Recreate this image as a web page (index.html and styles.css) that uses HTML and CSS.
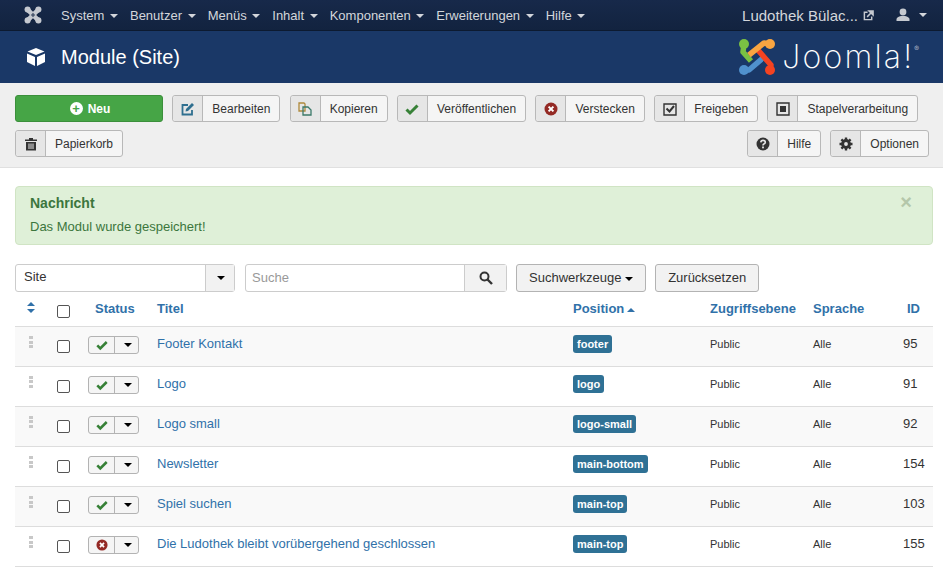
FILE: index.html
```html
<!DOCTYPE html>
<html lang="de">

<head>
    <meta charset="UTF-8">
    <meta name="viewport" content="width=device-width, initial-scale=1.0">
    <title>Module (Site)</title>
    <link rel="stylesheet" href="styles.css">
</head>

<body>
    <svg class="sprites" width="0" height="0">
        <symbol id="ok" viewBox="0 0 14 14"><path d="M1.5 7.5 L5 11 L12.5 3.5" fill="none" stroke="currentColor" stroke-width="3"/></symbol>
        <symbol id="no" viewBox="0 0 14 14"><circle cx="7" cy="7" r="6.5" fill="currentColor"/><path d="M4.6 4.6 L9.4 9.4 M9.4 4.6 L4.6 9.4" stroke="#fff" stroke-width="2"/></symbol>
    </svg>

    <nav class="topbar">
        <svg class="topbar-logo" viewBox="0 0 20 20" width="18" height="18">
            <path d="M4 4 L16 16 M16 4 L4 16" stroke="#c5c9d0" stroke-width="5"/>
            <circle cx="4" cy="4" r="3.4" fill="#c5c9d0"/><circle cx="16" cy="4" r="3.4" fill="#c5c9d0"/>
            <circle cx="4" cy="16" r="3.4" fill="#c5c9d0"/><circle cx="16" cy="16" r="3.4" fill="#c5c9d0"/>
            <path d="M10 7.6 L12.4 10 L10 12.4 L7.6 10 Z" fill="#4d5a70"/>
        </svg>
        <ul class="menu">
            <li>System <i class="caret"></i></li>
            <li>Benutzer <i class="caret"></i></li>
            <li>Menüs <i class="caret"></i></li>
            <li>Inhalt <i class="caret"></i></li>
            <li>Komponenten <i class="caret"></i></li>
            <li>Erweiterungen <i class="caret"></i></li>
            <li>Hilfe <i class="caret"></i></li>
        </ul>
        <div class="topbar-right">
            <span class="site-name">Ludothek Bülac...</span>
            <svg viewBox="0 0 12 12" width="11" height="11">
                <path d="M9.5 7 V10.5 H1.5 V2.5 H5" fill="none" stroke="#c5c9d0" stroke-width="1.6"/>
                <path d="M4.5 7.5 L10 2 M6.5 1 H11 V5.5 Z" stroke="#c5c9d0" stroke-width="1.6" fill="#c5c9d0"/>
            </svg>
            <svg class="user-icon" viewBox="0 0 14 14" width="14" height="14">
                <circle cx="7" cy="4" r="3.4" fill="#c5c9d0"/>
                <path d="M0.5 13 V11 Q1 9 5 8 H9 Q13 9 13.5 11 V13 Z" fill="#c5c9d0"/>
            </svg>
            <i class="caret"></i>
        </div>
    </nav>

    <header class="title-bar">
        <svg viewBox="0 0 20 20" width="20" height="20">
            <path d="M10 1 L18.5 4.5 L10 8 L1.5 4.5 Z" fill="#fff"/>
            <path d="M1 6.5 L9 10 V19 L1 15 Z M19 6.5 L11 10 V19 L19 15 Z" fill="#fff"/>
        </svg>
        <h1>Module (Site)</h1>
        <div class="brand">
            <svg viewBox="0 0 38 38" width="38" height="38">
                <g fill="none" stroke-width="5.5" stroke-linejoin="round">
                    <path d="M6 6 L5 14 L13 23" stroke="#7ac143"/>
                    <path d="M6 32 L11 32 L26 19" stroke="#5091cd"/>
                    <path d="M32 32 L33 27 L19 11" stroke="#f44321"/>
                    <path d="M32 6 L26 5 L11 17" stroke="#f9a541"/>
                </g>
                <circle cx="6" cy="6" r="5" fill="#7ac143"/><circle cx="32" cy="6" r="5" fill="#f9a541"/>
                <circle cx="32" cy="32" r="5" fill="#f44321"/><circle cx="6" cy="32" r="5" fill="#5091cd"/>
            </svg>
            <span class="brand-name">Joomla!<sup>®</sup></span>
        </div>
    </header>

    <section class="toolbar">
        <div class="toolbar-row toolbar-row-1">
            <button class="btn-new"><i class="plus">+</i> Neu</button>
            <button class="btn"><span class="ico ico-edit"><svg viewBox="0 0 14 14" width="14" height="14"><path d="M11 8 V12.5 H1.5 V3 H7" fill="none" stroke="currentColor" stroke-width="1.8"/><path d="M4.5 9.5 L5 7 L11 1 L13 3 L7 9 Z" fill="currentColor"/></svg></span><span class="lbl">Bearbeiten</span></button>
            <button class="btn"><span class="ico ico-copy"><svg viewBox="0 0 14 14" width="14" height="14"><path d="M1 1 H6 L7 2 V9 H1 Z" fill="none" stroke="#b08a3c" stroke-width="1.3"/><path d="M5 5 H10 L13 8 V13 H5 Z" fill="none" stroke="#3c7a6a" stroke-width="1.3"/></svg></span><span class="lbl">Kopieren</span></button>
            <button class="btn"><span class="ico ico-ok"><svg width="14" height="14"><use href="#ok"/></svg></span><span class="lbl">Veröffentlichen</span></button>
            <button class="btn"><span class="ico ico-no"><svg width="14" height="14"><use href="#no"/></svg></span><span class="lbl">Verstecken</span></button>
            <button class="btn"><span class="ico"><svg viewBox="0 0 14 14" width="14" height="14"><path d="M1 2 H13 V13 H1 Z" fill="none" stroke="currentColor" stroke-width="1.4"/><path d="M3.5 6.5 L6.5 9.5 L11 4" fill="none" stroke="currentColor" stroke-width="2"/></svg></span><span class="lbl">Freigeben</span></button>
            <button class="btn"><span class="ico"><svg viewBox="0 0 14 14" width="14" height="14"><path d="M1 1 H13 V13 H1 Z" fill="none" stroke="currentColor" stroke-width="1.4"/><rect x="4" y="4" width="6" height="6" fill="currentColor"/></svg></span><span class="lbl">Stapelverarbeitung</span></button>
        </div>
        <div class="toolbar-row toolbar-row-2">
            <button class="btn"><span class="ico"><svg viewBox="0 0 14 14" width="14" height="14"><path d="M1 2.5 H13 V4 H1 Z M5 1 H9 V2.5 H5 Z" fill="currentColor"/><path d="M2 5 H12 V13.5 H2 Z" fill="currentColor"/><path d="M5 6.5 V12 M7 6.5 V12 M9 6.5 V12" stroke="#e6e6e6" stroke-width="1"/></svg></span><span class="lbl">Papierkorb</span></button>
            <div class="toolbar-right">
                <button class="btn"><span class="ico"><svg viewBox="0 0 14 14" width="14" height="14"><circle cx="7" cy="7" r="6.5" fill="currentColor"/><path d="M4.8 5.4 Q5 3.4 7 3.4 Q9.3 3.4 9.3 5.3 Q9.3 6.4 7.9 7 Q7 7.4 7 8.4" fill="none" stroke="#e6e6e6" stroke-width="1.6"/><rect x="6.1" y="9.5" width="1.8" height="1.8" fill="#e6e6e6"/></svg></span><span class="lbl">Hilfe</span></button>
                <button class="btn"><span class="ico"><svg viewBox="0 0 14 14" width="14" height="14"><circle cx="7" cy="7" r="3.4" fill="none" stroke="currentColor" stroke-width="3"/><path d="M7 0.5 V13.5 M0.5 7 H13.5 M2.4 2.4 L11.6 11.6 M11.6 2.4 L2.4 11.6" stroke="currentColor" stroke-width="2.4" stroke-dasharray="2.6 7.8 2.6"/></svg></span><span class="lbl">Optionen</span></button>
            </div>
        </div>
    </section>

    <main class="content">
        <div class="alert">
            <span class="alert-close">×</span>
            <h4>Nachricht</h4>
            <p>Das Modul wurde gespeichert!</p>
        </div>

        <div class="filters">
            <div class="select-box">
                <span class="select-value">Site</span>
                <span class="select-arrow"><i class="caret"></i></span>
            </div>
            <div class="search">
                <span class="search-input">Suche</span>
                <span class="search-btn"><svg viewBox="0 0 14 14" width="14" height="14"><circle cx="5.5" cy="5.5" r="4" fill="none" stroke="currentColor" stroke-width="2"/><path d="M8.5 8.5 L13 13" stroke="currentColor" stroke-width="2.4"/></svg></span>
            </div>
            <button class="plain-btn">Suchwerkzeuge <i class="caret"></i></button>
            <button class="plain-btn">Zurücksetzen</button>
        </div>

        <table class="modules">
            <thead>
                <tr>
                    <th class="col-order"><svg class="sort-both" viewBox="0 0 8 11" width="8" height="11"><path d="M4 0 L8 4 H0 Z M0 7 H8 L4 11 Z" fill="#3071a9"/></svg></th>
                    <th class="col-check"><i class="check"></i></th>
                    <th class="col-status">Status</th>
                    <th class="col-title">Titel</th>
                    <th class="col-pos">Position <i class="caret-up"></i></th>
                    <th class="col-access">Zugriffsebene</th>
                    <th class="col-lang">Sprache</th>
                    <th class="col-id">ID</th>
                </tr>
            </thead>
            <tbody>
                <tr>
                    <td><span class="drag"></span></td>
                    <td><i class="check"></i></td>
                    <td><span class="state"><span class="state-ico ico-ok"><svg width="12" height="12"><use href="#ok"/></svg></span><span class="state-drop"><i class="caret"></i></span></span></td>
                    <td class="title-cell">Footer Kontakt</td>
                    <td><span class="badge">footer</span></td>
                    <td class="small">Public</td>
                    <td class="small">Alle</td>
                    <td class="id-cell">95</td>
                </tr>
                <tr>
                    <td><span class="drag"></span></td>
                    <td><i class="check"></i></td>
                    <td><span class="state"><span class="state-ico ico-ok"><svg width="12" height="12"><use href="#ok"/></svg></span><span class="state-drop"><i class="caret"></i></span></span></td>
                    <td class="title-cell">Logo</td>
                    <td><span class="badge">logo</span></td>
                    <td class="small">Public</td>
                    <td class="small">Alle</td>
                    <td class="id-cell">91</td>
                </tr>
                <tr>
                    <td><span class="drag"></span></td>
                    <td><i class="check"></i></td>
                    <td><span class="state"><span class="state-ico ico-ok"><svg width="12" height="12"><use href="#ok"/></svg></span><span class="state-drop"><i class="caret"></i></span></span></td>
                    <td class="title-cell">Logo small</td>
                    <td><span class="badge">logo-small</span></td>
                    <td class="small">Public</td>
                    <td class="small">Alle</td>
                    <td class="id-cell">92</td>
                </tr>
                <tr>
                    <td><span class="drag"></span></td>
                    <td><i class="check"></i></td>
                    <td><span class="state"><span class="state-ico ico-ok"><svg width="12" height="12"><use href="#ok"/></svg></span><span class="state-drop"><i class="caret"></i></span></span></td>
                    <td class="title-cell">Newsletter</td>
                    <td><span class="badge">main-bottom</span></td>
                    <td class="small">Public</td>
                    <td class="small">Alle</td>
                    <td class="id-cell">154</td>
                </tr>
                <tr>
                    <td><span class="drag"></span></td>
                    <td><i class="check"></i></td>
                    <td><span class="state"><span class="state-ico ico-ok"><svg width="12" height="12"><use href="#ok"/></svg></span><span class="state-drop"><i class="caret"></i></span></span></td>
                    <td class="title-cell">Spiel suchen</td>
                    <td><span class="badge">main-top</span></td>
                    <td class="small">Public</td>
                    <td class="small">Alle</td>
                    <td class="id-cell">103</td>
                </tr>
                <tr>
                    <td><span class="drag"></span></td>
                    <td><i class="check"></i></td>
                    <td><span class="state"><span class="state-ico ico-no"><svg width="12" height="12"><use href="#no"/></svg></span><span class="state-drop"><i class="caret"></i></span></span></td>
                    <td class="title-cell">Die Ludothek bleibt vorübergehend geschlossen</td>
                    <td><span class="badge">main-top</span></td>
                    <td class="small">Public</td>
                    <td class="small">Alle</td>
                    <td class="id-cell">155</td>
                </tr>
            </tbody>
        </table>
    </main>
</body>

</html>
```

FILE: styles.css
```css
html,
body {
    height: 567px;
    overflow: hidden;
}

body {
    margin: 0;
    background-color: #fff;
    color: #333;
    font-family: "Liberation Sans", Arial, sans-serif;
    font-size: 13px;
}

.sprites {
    position: absolute;
}

.caret {
    display: inline-block;
    width: 0;
    height: 0;
    margin-left: 2px;
    vertical-align: middle;
    border-top: 4px solid #000;
    border-left: 4px solid transparent;
    border-right: 4px solid transparent;
}

/* barra superior */
.topbar {
    display: flex;
    align-items: center;
    height: 30px;
    padding-left: 24px;
    background: linear-gradient(#17294a, #12233f);
    border-bottom: 1px solid #0c1a30;
    color: #d3d6db;
    font-size: 13px;
}

.topbar .caret {
    border-top-color: #d3d6db;
}

.menu {
    display: flex;
    gap: 12px;
    margin: 0 0 0 19px;
    padding: 0;
    list-style: none;
}

.topbar-right {
    display: flex;
    align-items: center;
    margin-left: auto;
    padding-right: 16px;
}

.site-name {
    margin-right: 5px;
    font-size: 15px;
}

.user-icon {
    margin: 0 7px 0 22px;
}

/* titulo */
.title-bar {
    display: flex;
    align-items: center;
    height: 52px;
    padding-left: 26px;
    background-color: #1a3867;
    color: #fff;
}

.title-bar h1 {
    margin: 0 0 0 15px;
    font-size: 20px;
    font-weight: normal;
}

.brand {
    display: flex;
    align-items: center;
    gap: 6px;
    margin-left: auto;
    padding-right: 24px;
}

.brand-name {
    color: #fff;
    font-family: Inter, "Liberation Sans", sans-serif;
    font-size: 32px;
    font-weight: 200;
    letter-spacing: 2.2px;
    line-height: 34px;
}

.brand-name sup {
    font-size: 7px;
    letter-spacing: 0;
    line-height: 0;
    vertical-align: 17px;
}

/* toolbar */
.toolbar {
    padding: 12px 14px 10px 15px;
    background-color: #efefef;
    border-bottom: 1px solid #e0e0e0;
}

.toolbar-row {
    display: flex;
    gap: 9px;
}

.toolbar-row-1 {
    gap: 9.3px;
}

.toolbar-row-2 {
    margin-top: 8px;
}

.toolbar-right {
    display: flex;
    gap: 9px;
    margin-left: auto;
}

.btn,
.btn-new {
    font-family: inherit;
    font-size: 12px;
    cursor: pointer;
}

.plain-btn {
    font-family: inherit;
    font-size: 13px;
    cursor: pointer;
}

.btn {
    display: flex;
    align-items: stretch;
    height: 27px;
    padding: 0;
    background-color: #f5f5f5;
    border: 1px solid #b8b8b8;
    border-radius: 3px;
    color: #333;
}

.btn .ico {
    display: flex;
    align-items: center;
    justify-content: center;
    width: 29px;
    background-color: #e6e6e6;
    border-right: 1px solid #b8b8b8;
    border-radius: 3px 0 0 3px;
    color: #333;
}

.btn .lbl {
    align-self: center;
    padding: 0 9px;
}

.btn-new {
    display: flex;
    align-items: center;
    justify-content: center;
    gap: 5px;
    width: 148px;
    height: 27px;
    padding: 0 0 0 2px;
    background-color: #46a546;
    border: 1px solid #3b8f3b;
    border-radius: 3px;
    color: #fff;
    font-weight: bold;
}

.plus {
    display: inline-block;
    width: 13px;
    height: 13px;
    background-color: #fff;
    border-radius: 50%;
    color: #46a546;
    font-size: 13px;
    font-style: normal;
    font-weight: bold;
    line-height: 13px;
    text-align: center;
}

.ico-edit {
    color: #2f6f8f !important;
}

.ico-ok {
    color: #378137 !important;
}

.ico-no {
    color: #942a25 !important;
}

/* contenido */
.content {
    padding: 18px 10px 0 15px;
}

.alert {
    position: relative;
    height: 59px;
    box-sizing: border-box;
    padding: 8px 14px;
    background-color: #dff0d8;
    border: 1px solid #d0e4c4;
    border-radius: 4px;
    color: #3c763d;
}

.alert h4 {
    margin: 0;
    font-size: 14px;
    line-height: 16px;
}

.alert p {
    margin: 8px 0 0;
    line-height: 16px;
}

.alert-close {
    position: absolute;
    top: 5px;
    right: 20px;
    color: #b4c7aa;
    font-size: 20px;
    font-weight: bold;
    line-height: 20px;
}

.filters {
    display: flex;
    align-items: center;
    height: 29px;
    margin-top: 18px;
}

.select-box {
    display: flex;
    box-sizing: border-box;
    width: 220px;
    height: 28px;
    background-color: #fff;
    border: 1px solid #ccc;
    border-radius: 3px;
}

.select-value {
    flex: 1;
    padding-left: 8px;
    line-height: 24px;
}

.select-arrow {
    display: flex;
    align-items: center;
    justify-content: center;
    width: 28px;
    background-color: #f2f2f2;
    border-left: 1px solid #ccc;
}

.search {
    display: flex;
    box-sizing: border-box;
    width: 262px;
    height: 28px;
    margin: 1px 0 0 10px;
    background-color: #fff;
    border: 1px solid #ccc;
    border-radius: 3px;
}

.search-input {
    flex: 1;
    padding-left: 6px;
    color: #999;
    line-height: 26px;
}

.search-btn {
    display: flex;
    align-items: center;
    justify-content: center;
    width: 41px;
    background-color: #f2f2f2;
    border-left: 1px solid #ccc;
    color: #333;
}

.plain-btn {
    height: 28px;
    margin-left: 9px;
    padding: 0 12px;
    background-color: #f2f2f2;
    border: 1px solid #b3b3b3;
    border-radius: 3px;
    color: #333;
}

.plain-btn .caret {
    margin-left: 0;
}

/* tabla */
.modules {
    width: 918px;
    border-collapse: collapse;
    table-layout: fixed;
}

.modules th {
    height: 34px;
    padding: 0;
    box-sizing: border-box;
    color: #3071a9;
    font-weight: bold;
    text-align: left;
}

.modules td {
    height: 40px;
    padding: 0;
    box-sizing: border-box;
    border-top: 1px solid #ddd;
    vertical-align: top;
}

.modules tr:last-child td {
    border-bottom: 1px solid #ddd;
}

.modules tbody tr:nth-child(odd) td {
    background-color: #f9f9f9;
}

.col-order {
    width: 36px;
}

.col-check {
    width: 37px;
}

.modules .col-status {
    width: 69px;
    padding-left: 7px;
}

.col-title {
    width: 416px;
}

.col-pos {
    width: 137px;
}

.col-access {
    width: 103px;
}

.col-lang {
    width: 80px;
}

.modules .col-id {
    padding-left: 14px;
}

.sort-both {
    display: block;
    margin: 0 0 2px 12px;
}

.caret-up {
    display: inline-block;
    width: 0;
    height: 0;
    margin-left: -1px;
    vertical-align: middle;
    border-bottom: 4px solid #3071a9;
    border-left: 4px solid transparent;
    border-right: 4px solid transparent;
}

.check {
    display: block;
    box-sizing: border-box;
    width: 13px;
    height: 13px;
    margin: 13px 0 0 6px;
    background-color: #fff;
    border: 1px solid #555;
    border-radius: 2px;
}

.modules th .check {
    margin-top: 5px;
}

.drag {
    display: block;
    width: 4px;
    height: 12px;
    margin: 9px 0 0 14px;
    background: repeating-linear-gradient(#c8c8c8 0 3px, transparent 3px 4.5px);
}

.state {
    display: inline-flex;
    width: 51px;
    height: 18px;
    margin-top: 9px;
    box-sizing: border-box;
    background-color: #f5f5f5;
    border: 1px solid #b3b3b3;
    border-radius: 3px;
}

.state-ico {
    display: flex;
    align-items: center;
    justify-content: center;
    width: 25px;
    border-right: 1px solid #b3b3b3;
}

.state-drop {
    display: flex;
    flex: 1;
    align-items: center;
    justify-content: center;
}

.modules .title-cell {
    padding-top: 9px;
    color: #3071a9;
    line-height: 16px;
}

.badge {
    display: inline-block;
    margin-top: 8px;
    padding: 0 4px;
    background-color: #2f7195;
    border-radius: 3px;
    color: #fff;
    font-size: 11px;
    font-weight: bold;
    line-height: 18px;
}

.modules .small {
    padding-top: 10px;
    font-size: 11px;
    line-height: 14px;
}

.modules .id-cell {
    padding: 9px 0 0 10px;
    line-height: 16px;
}
```
